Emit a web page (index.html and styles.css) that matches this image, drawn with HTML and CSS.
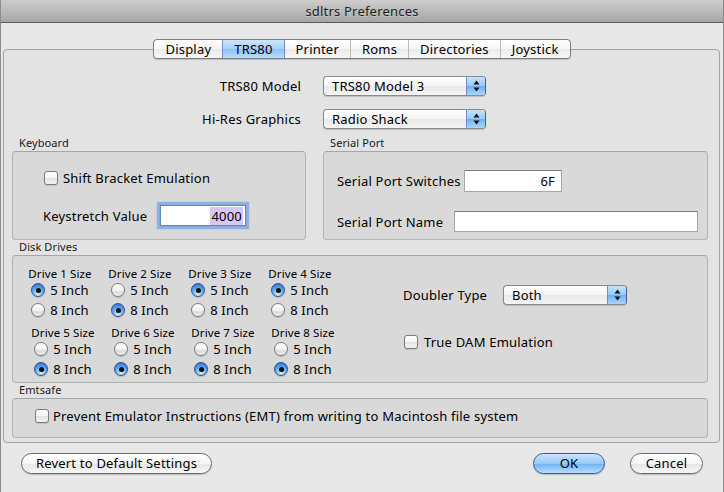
FILE: index.html
```html
<!DOCTYPE html>
<html>
<head>
<meta charset="utf-8">
<title>sdltrs Preferences</title>
<link rel="stylesheet" href="styles.css">
</head>
<body>
<div class="window">
  <div class="titlebar">sdltrs Preferences</div>
  <div class="content">
    <div class="tabs">
      <div class="seg">
        <span class="tab">Display</span>
        <span class="tab sel">TRS80</span>
        <span class="tab">Printer</span>
        <span class="tab">Roms</span>
        <span class="tab">Directories</span>
        <span class="tab">Joystick</span>
      </div>
    </div>
    <div class="pane">
      <div class="topform">
        <span class="flabel">TRS80 Model</span>
        <div class="popup"><span class="ptext">TRS80 Model 3</span><span class="parrow"><svg width="7" height="12" viewBox="0 0 7 12"><path d="M3.5 0.5L6.5 4.5H0.5Z M0.5 7.5H6.5L3.5 11.5Z"/></svg></span></div>
        <span class="flabel">Hi-Res Graphics</span>
        <div class="popup"><span class="ptext">Radio Shack</span><span class="parrow"><svg width="7" height="12" viewBox="0 0 7 12"><path d="M3.5 0.5L6.5 4.5H0.5Z M0.5 7.5H6.5L3.5 11.5Z"/></svg></span></div>
      </div>

      <div class="pair">
        <div class="group kb">
          <div class="glabel">Keyboard</div>
          <div class="gbox kbbox">
            <div class="check kb-check"><span class="cbox"></span>Shift Bracket Emulation</div>
            <div class="frow kb-row">
              <span class="kb-l">Keystretch Value</span>
              <div class="field focus kb-f"><span class="selected">4000</span></div>
            </div>
          </div>
        </div>
        <div class="group sp">
          <div class="glabel">Serial Port</div>
          <div class="gbox spbox">
            <div class="frow sp-row1">
              <span class="sp-l1">Serial Port Switches</span>
              <div class="field sp-f1">6F</div>
            </div>
            <div class="frow sp-row2">
              <span class="sp-l2">Serial Port Name</span>
              <div class="field sp-f2"></div>
            </div>
          </div>
        </div>
      </div>

      <div class="group">
        <div class="glabel">Disk Drives</div>
        <div class="gbox ddbox">
          <div class="drives">
            <div class="drow">
              <div class="drive"><div class="dlabel">Drive 1 Size</div><div class="radios"><div class="ropt"><span class="radio on"></span>5 Inch</div><div class="ropt"><span class="radio"></span>8 Inch</div></div></div>
              <div class="drive"><div class="dlabel">Drive 2 Size</div><div class="radios"><div class="ropt"><span class="radio"></span>5 Inch</div><div class="ropt"><span class="radio on"></span>8 Inch</div></div></div>
              <div class="drive"><div class="dlabel">Drive 3 Size</div><div class="radios"><div class="ropt"><span class="radio on"></span>5 Inch</div><div class="ropt"><span class="radio"></span>8 Inch</div></div></div>
              <div class="drive"><div class="dlabel">Drive 4 Size</div><div class="radios"><div class="ropt"><span class="radio on"></span>5 Inch</div><div class="ropt"><span class="radio"></span>8 Inch</div></div></div>
            </div>
            <div class="drow drow2">
              <div class="drive"><div class="dlabel">Drive 5 Size</div><div class="radios"><div class="ropt"><span class="radio"></span>5 Inch</div><div class="ropt"><span class="radio on"></span>8 Inch</div></div></div>
              <div class="drive"><div class="dlabel">Drive 6 Size</div><div class="radios"><div class="ropt"><span class="radio"></span>5 Inch</div><div class="ropt"><span class="radio on"></span>8 Inch</div></div></div>
              <div class="drive"><div class="dlabel">Drive 7 Size</div><div class="radios"><div class="ropt"><span class="radio"></span>5 Inch</div><div class="ropt"><span class="radio on"></span>8 Inch</div></div></div>
              <div class="drive"><div class="dlabel">Drive 8 Size</div><div class="radios"><div class="ropt"><span class="radio"></span>5 Inch</div><div class="ropt"><span class="radio on"></span>8 Inch</div></div></div>
            </div>
          </div>
          <div class="doubler">
            <div class="frow dbl-row">
              <span class="dbl-l">Doubler Type</span>
              <div class="popup dbl-pop"><span class="ptext">Both</span><span class="parrow"><svg width="7" height="12" viewBox="0 0 7 12"><path d="M3.5 0.5L6.5 4.5H0.5Z M0.5 7.5H6.5L3.5 11.5Z"/></svg></span></div>
            </div>
            <div class="check dam"><span class="cbox"></span>True DAM Emulation</div>
          </div>
        </div>
      </div>

      <div class="group">
        <div class="glabel">Emtsafe</div>
        <div class="gbox embox">
          <div class="check"><span class="cbox"></span>Prevent Emulator Instructions (EMT) from writing to Macintosh file system</div>
        </div>
      </div>
    </div>

    <div class="buttons">
      <div class="btn revert">Revert to Default Settings</div>
      <div class="spacer"></div>
      <div class="btn default ok">OK</div>
      <div class="btn cancel">Cancel</div>
    </div>
  </div>
</div>
</body>
</html>
```

FILE: styles.css
```css
* { box-sizing: border-box; margin: 0; padding: 0; }

body {
  margin: 0;
  font-family: "Noto Sans", "DejaVu Sans", sans-serif;
  font-size: 13px;
  letter-spacing: 0.2px;
  color: #000;
  background: #e8e8e8;
}

.window {
  width: 724px;
  height: 492px;
  background: #e8e8e8;
  border-left: 1px solid #8c8c8c;
  border-right: 1px solid #8c8c8c;
  display: flex;
  flex-direction: column;
  overflow: hidden;
}

.titlebar {
  height: 23px;
  border-bottom: 1px solid #595959;
  background: linear-gradient(#cdcdcd, #a6a6a6);
  text-align: center;
  line-height: 22px;
  font-size: 13px;
  color: #222;
  text-shadow: 0 1px 0 rgba(255,255,255,0.3);
}

.content {
  padding: 16px 0 0 0;
  display: flex;
  flex-direction: column;
}

/* segmented tabs */
.tabs {
  display: flex;
  justify-content: center;
  height: 20px;
  margin-bottom: -10px;
  position: relative;
  z-index: 1;
}
.seg {
  display: flex;
  height: 20px;
  border: 1px solid #7e7e7e;
  border-radius: 4px;
  overflow: hidden;
  background: linear-gradient(#ffffff, #f6f6f6 50%, #ebebeb 51%, #f7f7f7);
  box-shadow: 0 1px 1px rgba(0,0,0,0.18);
}
.tab {
  padding: 0 11px;
  line-height: 18px;
  border-left: 1px solid #bcbcbc;
}
.tab:first-child { border-left: 0; }
.tab.sel {
  background: linear-gradient(#cbe5fc, #a8d0f8 50%, #8ec2f4 51%, #b6dcfd);
  border-left-color: #6d8fc6;
  border-right: 1px solid #6d8fc6;
}
.tab.sel + .tab { border-left: 0; }

/* tab pane */
.pane {
  margin: 0 3px 0 2px;
  height: 394px;
  border: 1px solid #a3a3a3;
  border-radius: 4px;
  background: #e3e3e3;
  padding: 26px 11px 4px 8px;
  display: flex;
  flex-direction: column;
}

.topform {
  display: grid;
  grid-template-columns: 289px 163px;
  column-gap: 22px;
  row-gap: 13px;
  align-items: center;
}
.flabel { text-align: right; line-height: 20px; }

.popup {
  display: flex;
  height: 20px;
  border: 1px solid #8a8a8a;
  border-right-color: #41609e;
  border-radius: 4px;
  background: linear-gradient(#ffffff, #f5f5f5 50%, #e9e9e9 51%, #f4f4f4);
  box-shadow: 0 1px 1px rgba(0,0,0,0.16);
  overflow: hidden;
}
.ptext { flex: 1; padding-left: 8px; line-height: 18px; }
.parrow {
  width: 19px;
  display: flex;
  align-items: center;
  justify-content: center;
  background: linear-gradient(#c4e2fc, #95c8f6 50%, #6eb0f1 51%, #aad6fc);
  border-left: 1px solid #6e8ec6;
}
.parrow svg { fill: #111; }

/* groups */
.pair {
  margin-top: 7px;
  display: flex;
  gap: 17px;
}
.kb { width: 294px; }
.sp { width: 385px; }
.glabel {
  font-size: 11px;
  line-height: 13px;
  letter-spacing: 0.1px;
  padding-left: 7px;
  margin-bottom: 2px;
  color: #1a1a1a;
}
.gbox {
  border: 1px solid #b3b3b3;
  border-top-color: #a6a6a6;
  border-radius: 4px;
  background: #d9d9d9;
}
.kbbox, .spbox { height: 89px; }

.check {
  display: flex;
  align-items: center;
  gap: 5px;
  height: 14px;
  line-height: 14px;
}
.cbox {
  width: 14px;
  height: 14px;
  border: 1px solid #7b7b7b;
  border-radius: 3px;
  background: linear-gradient(#ffffff, #f4f4f4 50%, #e4e4e4 51%, #f2f2f2);
  box-shadow: 0 1px 1px rgba(0,0,0,0.12);
  flex: none;
}

.frow { display: flex; align-items: center; }

.kb-check { margin: 19px 0 0 31px; }
.kb-row { margin: 20px 0 0 30px; }
.kb-l { width: 117px; }

.field {
  height: 22px;
  background: #fff;
  border: 1px solid #a8a8a8;
  border-top-color: #7c7c7c;
  text-align: right;
  line-height: 20px;
  padding-right: 4px;
}
.kb-f {
  width: 86px;
  height: 21px;
  padding-right: 2px;
}
.focus {
  border-color: #5c8bcc;
  box-shadow: 0 0 0 1px #86acdd, 0 0 1px 3px rgba(120,163,219,0.75);
}
.selected { background: #d6c8f5; padding: 0 1px; }

.sp-row1 { margin: 18px 0 0 13px; }
.sp-row2 { margin: 19px 0 0 13px; }
.sp-l1 { width: 127px; }
.sp-l2 { width: 117px; }
.sp-f1 { width: 98px; padding-right: 6px; }
.sp-f2 { width: 244px; height: 21px; }

/* disk drives */
.ddbox {
  height: 128px;
  display: flex;
  padding: 11px 0 0 7px;
}
.drives { display: flex; flex-direction: column; gap: 6px; }
.drow { display: flex; }
.drow2 { margin-left: 3px; }
.drive {
  width: 80px;
  display: flex;
  flex-direction: column;
  align-items: center;
}
.dlabel { font-size: 11.5px; line-height: 13px; letter-spacing: 0.1px; }
.ropt {
  display: flex;
  align-items: center;
  gap: 5px;
  height: 20px;
}
.radio {
  width: 14px;
  height: 14px;
  border-radius: 50%;
  border: 1px solid #7a7a7a;
  background: linear-gradient(#ffffff, #f2f2f2 50%, #dcdcdc 70%, #f4f4f4);
  box-shadow: 0 1px 1px rgba(0,0,0,0.15);
  display: grid;
  place-items: center;
  flex: none;
}
.radio.on {
  border-color: #2f4f93;
  background: radial-gradient(circle at 50% 85%, #d4f0ff 0, #86c6f7 30%, #4a93e8 65%, #2d67c9 100%);
}
.radio.on::after {
  content: "";
  width: 5px;
  height: 5px;
  border-radius: 50%;
  background: #0c0c0c;
}

.doubler {
  margin-left: 60px;
  padding-top: 18px;
  display: flex;
  flex-direction: column;
}
.dbl-l { width: 100px; }
.dbl-pop { width: 124px; }
.dam { margin: 30px 0 0 1px; gap: 6px; }

/* emtsafe */
.embox {
  height: 40px;
  padding: 10px 0 0 22px;
}
.embox .check { gap: 4px; }

/* buttons */
.buttons {
  display: flex;
  margin-top: 10px;
  padding: 0 20px 0 20px;
  gap: 25px;
}
.spacer { flex: 1; }
.btn {
  height: 21px;
  border-radius: 11px;
  border: 1px solid #6b6b6b;
  background: linear-gradient(#ffffff, #f6f6f6 50%, #e6e6e6 51%, #f6f6f6);
  box-shadow: 0 1px 1px rgba(0,0,0,0.2);
  text-align: center;
  line-height: 19px;
}
.btn.default {
  border-color: #3b5a9c;
  background: linear-gradient(#c8e4fd, #97c9f6 50%, #72b2f1 51%, #b5ddff);
}
.revert { width: 191px; }
.ok { width: 72px; }
.cancel { width: 73px; }
.spacer + .ok { margin-left: -25px; }
```
